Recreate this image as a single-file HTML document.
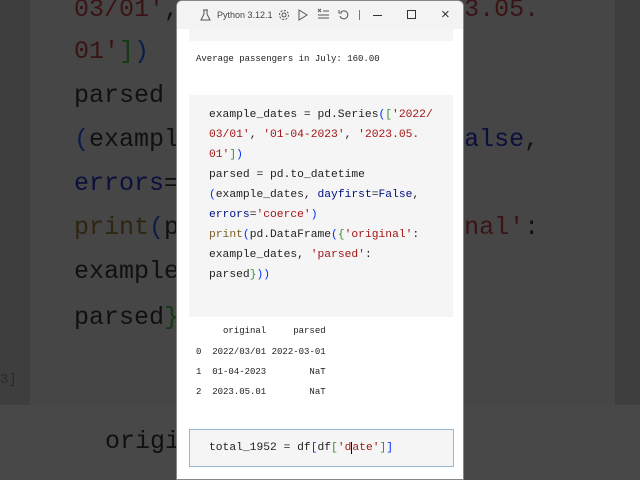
<!DOCTYPE html>
<html><head><meta charset="utf-8"><style>
*{margin:0;padding:0;box-sizing:border-box}
body{width:640px;height:480px;overflow:hidden;position:relative;background:#3e3e3e;font-family:"Liberation Mono",monospace}
.bgtxt{position:absolute;left:74px;font-size:25px;line-height:30px;white-space:pre;color:#101010}
.bgtxt .s{color:#3a1414}.bgtxt .k{color:#0a0f3c}.bgtxt .p{color:#0c1c4a}.bgtxt .g{color:#143a14}.bgtxt .f{color:#2e2410}
.s{color:#a31515}.k{color:#001080}.p{color:#0431fa}.g{color:#319331}.f{color:#795e26}
#win{position:absolute;left:176px;top:0;width:288px;height:480px;background:#fff;border-radius:6px 6px 0 0;overflow:hidden;border:1px solid #888}
#tb{position:absolute;left:0;top:0;width:100%;height:28px;background:#f3f3f3;font-family:"Liberation Sans",sans-serif;font-size:9px;color:#444}
.cl{position:absolute;left:32px;font-size:11.3px;line-height:20px;white-space:pre;color:#1f1f1f}
.o{position:absolute;font-size:9px;white-space:pre;color:#222}
</style></head><body>
<div style="position:absolute;left:30px;top:0;width:585px;height:405px;background:#464646"></div>
<div style="position:absolute;left:0;top:405px;width:640px;height:75px;background:#484848"></div>
<div class="bgtxt" style="top:-5px"><span class="s">03/01'</span>, <span class="s">'01-04-2023'</span>, <span class="s">'2023.05.</span></div>
<div class="bgtxt" style="top:37px"><span class="s">01'</span><span class="g">]</span><span class="p">)</span></div>
<div class="bgtxt" style="top:81px">parsed = pd.to_datetime</div>
<div class="bgtxt" style="top:125px"><span class="p">(</span>example_dates, <span class="k">dayfirst</span>=<span class="k">False</span>,</div>
<div class="bgtxt" style="top:169px"><span class="k">errors</span>=<span class="s">'coerce'</span><span class="p">)</span></div>
<div class="bgtxt" style="top:213px"><span class="f">print</span><span class="p">(</span>pd.DataFrame<span class="p">(</span><span class="g">{</span><span class="s">'original'</span>:</div>
<div class="bgtxt" style="top:257px">example_dates, <span class="s">'parsed'</span>:</div>
<div class="bgtxt" style="top:303px">parsed<span class="g">}</span><span class="p">))</span></div>
<div class="bgtxt" style="top:427px;left:105px">original</div>
<div style="position:absolute;left:0;top:372px;font-size:14px;color:#2a2a2a">3]</div>
<div id="win">
 <div id="tb">
  <svg style="position:absolute;left:23px;top:8px" width="11" height="12" viewBox="0 0 11 12" fill="none" stroke="#555" stroke-width="1"><path d="M3 1h5M4 1v4L1 11h9L7 5V1"/></svg>
  <span style="position:absolute;left:40px;top:9px">Python 3.12.1</span>
  <svg style="position:absolute;left:101px;top:8px" width="12" height="12" viewBox="0 0 12 12" fill="none" stroke="#555"><circle cx="6" cy="6" r="2"/><circle cx="6" cy="6" r="4.5" stroke-dasharray="2 1.5"/></svg>
  <svg style="position:absolute;left:120px;top:8px" width="12" height="12" viewBox="0 0 12 12" fill="none" stroke="#555"><path d="M2 1v10l8-5z"/></svg>
  <svg style="position:absolute;left:140px;top:7px" width="12" height="12" viewBox="0 0 12 12" fill="none" stroke="#555"><path d="M1 1l3 3M4 1l-3 3M6 3h6M1 7h11M1 10h11"/></svg>
  <svg style="position:absolute;left:161px;top:8px" width="12" height="12" viewBox="0 0 12 12" fill="none" stroke="#555"><path d="M3 3a4 4 0 1 1-1 4M1 1v3h3"/></svg>
  <div style="position:absolute;left:182px;top:9px;width:1px;height:10px;background:#777"></div>
  <div style="position:absolute;left:196px;top:14px;width:9px;height:1px;background:#333"></div>
  <div style="position:absolute;left:230px;top:9px;width:9px;height:9px;border:1px solid #333"></div>
  <span style="position:absolute;left:264px;top:5px;font-size:15px;color:#333">×</span>
 </div>
 <div style="position:absolute;left:12px;top:28px;width:264px;height:12px;background:#f5f5f5"></div>
 <div class="o" style="left:19px;top:53px">Average passengers in July: 160.00</div>
 <div style="position:absolute;left:12px;top:94px;width:264px;height:222px;background:#f5f5f5"></div>
 <div class="cl" style="top:104px">example_dates = pd.Series<span class="p">(</span><span class="g">[</span><span class="s">'2022/</span></div>
 <div class="cl" style="top:124px"><span class="s">03/01'</span>, <span class="s">'01-04-2023'</span>, <span class="s">'2023.05.</span></div>
 <div class="cl" style="top:144px"><span class="s">01'</span><span class="g">]</span><span class="p">)</span></div>
 <div class="cl" style="top:164px">parsed = pd.to_datetime</div>
 <div class="cl" style="top:184px"><span class="p">(</span>example_dates, <span class="k">dayfirst</span>=<span class="k">False</span>,</div>
 <div class="cl" style="top:204px"><span class="k">errors</span>=<span class="s">'coerce'</span><span class="p">)</span></div>
 <div class="cl" style="top:224px"><span class="f">print</span><span class="p">(</span>pd.DataFrame<span class="p">(</span><span class="g">{</span><span class="s">'original'</span>:</div>
 <div class="cl" style="top:244px">example_dates, <span class="s">'parsed'</span>:</div>
 <div class="cl" style="top:264px">parsed<span class="g">}</span><span class="p">))</span></div>
 <div class="o" style="left:19px;top:325px">     original     parsed</div>
 <div class="o" style="left:19px;top:346px">0  2022/03/01 2022-03-01</div>
 <div class="o" style="left:19px;top:366px">1  01-04-2023        NaT</div>
 <div class="o" style="left:19px;top:386px">2  2023.05.01        NaT</div>
 <div style="position:absolute;left:12px;top:428px;width:265px;height:38px;background:#f5f5f5;border:1px solid #9ab8d6"></div>
 <div class="cl" style="top:437px">total_1952 = df<span class="p">[</span>df<span class="g">[</span><span class="s">'d<span style="border-left:1px solid #000">a</span>te'</span><span class="g">]</span><span class="p">]</span></div>
</div>
</body></html>
